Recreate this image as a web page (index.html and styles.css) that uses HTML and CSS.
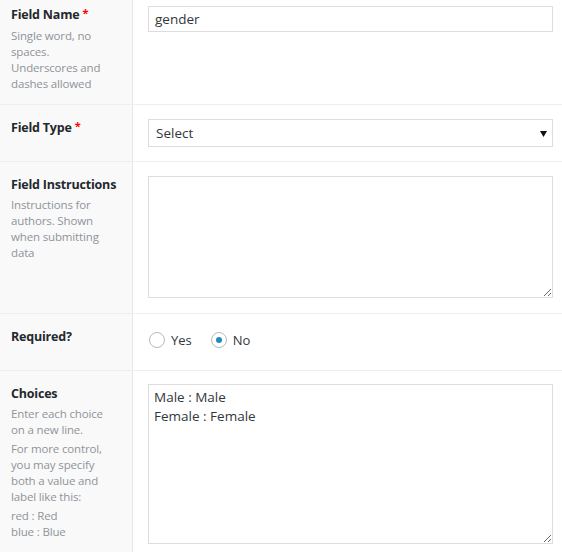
FILE: index.html
```html
<!DOCTYPE html>
<html>
<head>
<meta charset="utf-8">
<link rel="stylesheet" href="styles.css">
</head>
<body>
<div class="fields">
  <div class="field first">
    <div class="label">
      <div class="name">Field Name<span class="req">*</span></div>
      <p class="desc">Single word, no<br>spaces.<br>Underscores and<br>dashes allowed</p>
    </div>
    <div class="input">
      <input class="text" type="text" value="gender">
    </div>
  </div>
  <div class="field">
    <div class="label">
      <div class="name">Field Type<span class="req">*</span></div>
    </div>
    <div class="input">
      <div class="select-wrap">
        <select class="select"><option>Select</option></select>
        <svg class="arrow" width="7" height="6" viewBox="0 0 7 6"><path d="M0 0H7L3.5 6Z" fill="#111"/></svg>
      </div>
    </div>
  </div>
  <div class="field tall">
    <div class="label">
      <div class="name">Field Instructions</div>
      <p class="desc">Instructions for<br>authors. Shown<br>when submitting<br>data</p>
    </div>
    <div class="input">
      <textarea class="area short"></textarea>
    </div>
  </div>
  <div class="field radiorow">
    <div class="label">
      <div class="name">Required?</div>
    </div>
    <div class="input">
      <div class="radios">
        <label class="radio"><input type="radio" name="req"><span>Yes</span></label>
        <label class="radio"><input type="radio" name="req" checked><span>No</span></label>
      </div>
    </div>
  </div>
  <div class="field last">
    <div class="label">
      <div class="name">Choices</div>
      <p class="desc">Enter each choice<br>on a new line.</p>
      <p class="desc">For more control,<br>you may specify<br>both a value and<br>label like this:</p>
      <p class="desc">red : Red<br>blue : Blue</p>
    </div>
    <div class="input">
      <textarea class="area long">Male : Male
Female : Female</textarea>
    </div>
  </div>
</div>
</body>
</html>
```
FILE: styles.css
```css
html, body {
  margin: 0;
  padding: 0;
  background: #fff;
}
body {
  font-family: "Open Sans", "Noto Sans", sans-serif;
  color: #23282d;
  width: 562px;
  overflow: hidden;
}
.fields {
  display: flex;
  flex-direction: column;
}
.field {
  display: grid;
  grid-template-columns: 133px 1fr;
  border-bottom: 1px solid #eeeeee;
}
.label {
  background: #f9f9f9;
  border-right: 1px solid #e6e6e6;
  padding: 14px 8px 12px 11px;
}
.first .label { padding-top: 6px; }
.name {
  font-size: 12.5px;
  font-weight: 700;
  line-height: 18px;
  height: 18px;
  white-space: nowrap;
  letter-spacing: -0.2px;
}
.req {
  color: #f00;
  font-size: 11px;
  line-height: 0;
  margin-left: 3px;
  position: relative;
  top: -2px;
}
.desc {
  margin: 3px 0 0;
  font-size: 11.5px;
  line-height: 16px;
  color: #8f9499;
  white-space: nowrap;
  letter-spacing: -0.15px;
}
.first .desc { margin-top: 4px; }
.input {
  padding: 14px 9px 14px 15px;
}
.first .input { padding-top: 6px; }
.tall .input { padding-bottom: 15px; }
.radiorow .input { padding: 12px 9px 16px 15px; }
.last .input { padding-top: 13px; }
.text, .select, .area {
  box-sizing: border-box;
  width: 100%;
  margin: 0;
  border: 1px solid #dddddd;
  background: #fff;
  font-family: "Open Sans", "Noto Sans", sans-serif;
  font-size: 13.5px;
  color: #32373c;
  outline: none;
  border-radius: 0;
}
.text {
  display: block;
  height: 26px;
  padding: 0 5px 1px 6px;
}
.select-wrap {
  position: relative;
}
.select {
  display: block;
  appearance: none;
  -webkit-appearance: none;
  height: 28px;
  padding: 0 20px 0 7px;
}
.arrow {
  position: absolute;
  right: 6px;
  top: 12px;
}
.area {
  display: block;
  resize: vertical;
  padding: 3px 5px;
  line-height: 19px;
}
.area.short { height: 122px; }
.area.long { height: 160px; }
.radios {
  display: flex;
  align-items: center;
  gap: 18px;
  height: 28px;
  font-size: 13px;
  color: #32373c;
}
.radio {
  display: flex;
  align-items: center;
  gap: 6px;
}
.radio input {
  appearance: none;
  -webkit-appearance: none;
  box-sizing: border-box;
  width: 16px;
  height: 16px;
  margin: 0 0 0 1px;
  border: 1px solid #b4b9be;
  border-radius: 50%;
  background: #fff;
  display: grid;
  place-items: center;
}
.radio input:checked::before {
  content: "";
  width: 6px;
  height: 6px;
  border-radius: 50%;
  background: #1e8cbe;
}
```
